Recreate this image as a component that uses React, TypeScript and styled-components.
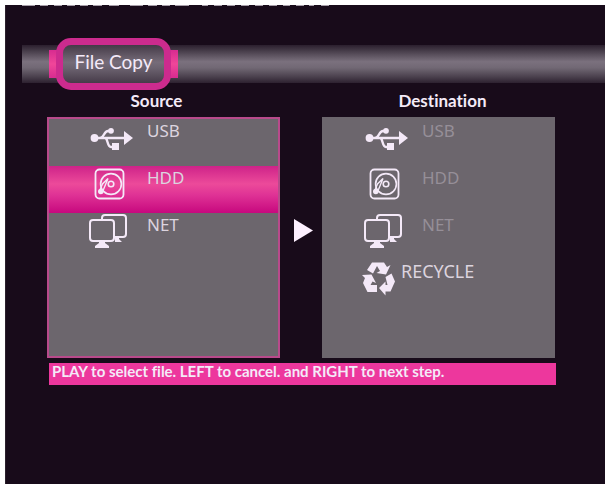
import React from "react";
import styled, { createGlobalStyle } from "styled-components";

const Global = createGlobalStyle`
  * { box-sizing: border-box; }
  body {
    margin: 0;
    background: #ffffff;
    font-family: Lato, "Noto Sans", sans-serif;
    font-variant-ligatures: none;
  }
`;

const Page = styled.div`
  min-height: 100vh;
  padding: 5px 1px 0 5px;
  display: flex;
`;

const Screen = styled.main`
  flex: 1;
  background: #180b1a;
  border-left: 1px solid #2b202c;
  color: #f4eaf8;
  overflow: hidden;
`;

const Dashes = styled.svg`
  display: block;
  margin-left: 14px;
`;

const TitleBar = styled.header`
  margin: 38px 0 0 16px;
  height: 38px;
  padding-left: 27px;
  display: flex;
  align-items: center;
  background: linear-gradient(#2b1f2e 0%, #443a47 14%, #7b717e 44%, #716874 60%, #4a404d 84%, #2d2130 100%);
`;

const TitleTab = styled.div`
  height: 28px;
  padding: 0 7px;
  display: flex;
  align-items: center;
  background: linear-gradient(#d72b90, #f04699 50%, #d72b90);
`;

const Title = styled.h1`
  margin: 0;
  height: 52px;
  width: 115px;
  padding-bottom: 5px;
  border: 7px solid #cc2b8e;
  border-radius: 15px;
  background: linear-gradient(#443a47 0%, #766c79 45%, #6c6370 60%, #463b49 100%);
  display: flex;
  align-items: center;
  justify-content: center;
  font-size: 19px;
  font-weight: 400;
  line-height: 24px;
  white-space: nowrap;
`;

const Content = styled.div`
  margin: 7px 49px 0 41px;
`;

const Columns = styled.div`
  margin-right: 1px;
  display: grid;
  grid-template-columns: 1fr 42px 1fr;
`;

const Heading = styled.h2<{ $before?: number; $after?: number }>`
  margin: 0;
  height: 27px;
  padding: 0 ${(p) => p.$after ?? 0}px 0 ${(p) => p.$before ?? 0}px;
  font-size: 17px;
  font-weight: 700;
  line-height: 22px;
  text-align: center;
`;

const Panel = styled.ul<{ $active?: boolean }>`
  list-style: none;
  margin: 0;
  padding: 0;
  height: 241px;
  background: #6c666d;
  border: 2px solid ${(p) => (p.$active ? "#b84a8b" : "#6c666d")};
`;

const Row = styled.button<{ $selected?: boolean; $muted?: boolean; $wide?: boolean }>`
  width: 100%;
  height: 47px;
  padding: 0 0 0 34px;
  border: 0;
  display: grid;
  grid-template-columns: ${(p) => (p.$wide ? "43px 1fr" : "64px 1fr")};
  align-items: start;
  text-align: left;
  font-family: "Noto Sans", sans-serif;
  font-size: ${(p) => (p.$wide ? 18 : 17)}px;
  line-height: 23px;
  color: ${(p) => (p.$muted ? "#968f98" : "#dcd4df")};
  background: ${(p) =>
    p.$selected ? "linear-gradient(#ce2389 0%, #ec4a9a 38%, #df3295 62%, #c7087e 100%)" : "transparent"};
  svg { display: block; color: #f4e9f8; }
`;

const Arrow = styled.div`
  align-self: center;
  justify-self: center;
  padding: 0 0 15px 4px;
  svg { display: block; }
`;

const Status = styled.footer`
  margin: 5px 0 0 2px;
  height: 22px;
  padding-left: 3px;
  background: #ed379d;
  font-size: 15px;
  font-weight: 700;
  line-height: 17px;
  white-space: nowrap;
`;

const dashes = [
  [2, 13], [20, 8], [34, 8], [47, 8], [60, 8], [73, 9], [89, 10],
  [110, 13], [128, 9], [142, 8], [155, 14],
  [182, 6], [194, 8], [207, 8], [221, 8], [235, 8], [249, 8], [263, 7], [276, 8], [289, 5], [301, 8],
];

const TopEdge = () => (
  <Dashes width="320" height="2" viewBox="0 0 320 2" fill="#a79fa9" aria-hidden="true">
    {dashes.map(([x, w]) => (
      <rect key={x} x={x} y="0" width={w} height="1" />
    ))}
  </Dashes>
);

const Usb = () => (
  <svg width="52" height="46" viewBox="0 0 52 46" fill="currentColor" aria-hidden="true">
    <circle cx="11.5" cy="19" r="3.9" />
    <path d="M41 12l9 7-9 7z" />
    <path
      d="M11 19h32M17 19c4 0 4-7 8-7h3M22 19c3 0 2 9 6 9h3"
      fill="none"
      stroke="currentColor"
      strokeWidth="2.4"
    />
    <circle cx="28" cy="11.8" r="2.9" />
    <path d="M29 24h7v7h-7z" />
  </svg>
);

const Hdd = () => (
  <svg width="46" height="46" viewBox="0 0 46 46" fill="none" stroke="currentColor" strokeWidth="1.8" aria-hidden="true">
    <rect x="12.5" y="3.5" width="28" height="29" rx="4" />
    <circle cx="28" cy="18" r="10.4" strokeWidth="1.6" />
    <circle cx="28" cy="18" r="2.8" strokeWidth="1.6" />
    <path d="M25 12.500l-5.500 5.500-3 7 3 1z" strokeWidth="1.400" />
    <circle cx="17.800" cy="25.500" r="2.800" fill="currentColor" stroke="none" />
  </svg>
);

const Net = () => (
  <svg width="46" height="46" viewBox="0 0 46 46" fill="none" stroke="currentColor" strokeWidth="2" aria-hidden="true">
    <path d="M19 6V5q0-3 3-3h18q3 0 3 3v16q0 3-3 3h-8" />
    <rect x="7" y="7" width="24" height="21" rx="3" />
    <path d="M32 24h4v2l3 3h-7z" fill="currentColor" stroke="none" />
    <path d="M16 28h6v2l4 3v2H12v-2l4-3z" fill="currentColor" stroke="none" />
  </svg>
);

const Recycle = () => (
  <svg width="43" height="46" viewBox="0 0 43 46" fill="currentColor" aria-hidden="true">
    <path d="M14 2.500h12l3 4.500 3.500-2-4.500 9.500-9.500-1.500 3.500-2-3-5-4 7.500-6-3.500z" />
    <path d="M27.500 17l6-3.500 3.500 8-4.500 10h-5V35.500L21 28l6.500-6.500V25h2z" />
    <path d="M4 15l9.500-.5 4.500 8.500-3.500-1.500-2 3.500H19v7H9.500L5 23l2-5z" />
  </svg>
);

export default function App() {
  return (
    <Page>
      <Global />
      <Screen>
        <TopEdge />
        <TitleBar>
          <TitleTab>
            <Title>File Copy</Title>
          </TitleTab>
        </TitleBar>
        <Content>
          <Columns>
            <Heading $after={14}>Source</Heading>
            <span />
            <Heading $before={8}>Destination</Heading>
            <Panel $active>
              <li><Row><Usb />USB</Row></li>
              <li><Row $selected aria-pressed="true"><Hdd />HDD</Row></li>
              <li><Row><Net />NET</Row></li>
            </Panel>
            <Arrow>
              <svg width="19" height="23" viewBox="0 0 19 23" aria-hidden="true">
                <path d="M0 0l19 11.500L0 23z" fill="#fdf0ff" />
              </svg>
            </Arrow>
            <Panel>
              <li><Row $muted><Usb />USB</Row></li>
              <li><Row $muted><Hdd />HDD</Row></li>
              <li><Row $muted><Net />NET</Row></li>
              <li><Row $wide><Recycle />RECYCLE</Row></li>
            </Panel>
          </Columns>
          <Status>PLAY to select file. LEFT to cancel. and RIGHT to next step.</Status>
        </Content>
      </Screen>
    </Page>
  );
}
